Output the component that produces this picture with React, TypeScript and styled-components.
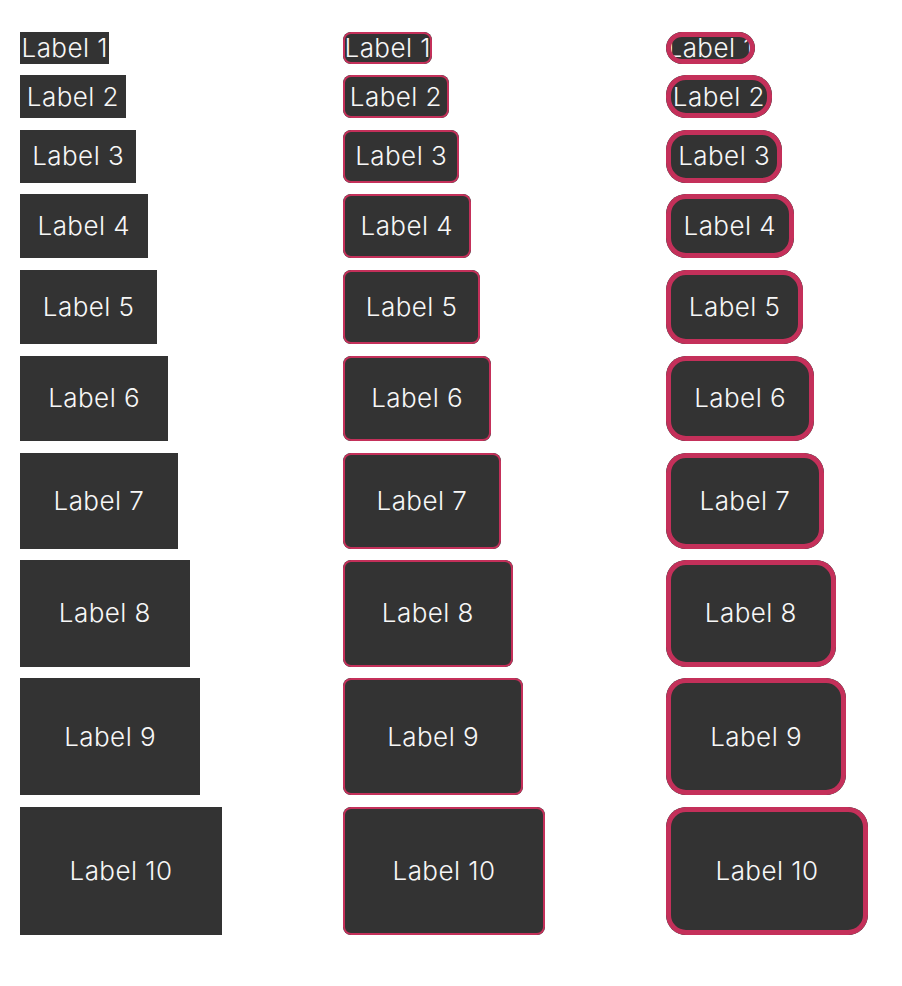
import styled, { createGlobalStyle, css } from 'styled-components';

const GlobalStyle = createGlobalStyle`
  html, body {
    margin: 0;
    background: #fff;
  }

  body {
    font-family: Inter, "Noto Sans", sans-serif;
  }
`;

type Variant = 'plain' | 'thin' | 'thick';

// every label grows its padding by the same step
const STEP = 16 / 3;

const Page = styled.div`
  display: grid;
  grid-template-columns: 323px 323px 1fr;
  padding: 32px 0 0 20px;
`;

const Column = styled.div`
  display: flex;
  flex-direction: column;
  align-items: flex-start;
  gap: 11.44px;
`;

const Tag = styled.div<{ $variant: Variant }>`
  position: relative;
  overflow: hidden;
  background: #333333;
  color: #f7f7f7;
  font-size: 26px;
  font-weight: 350;
  line-height: 32px;
  letter-spacing: 0.45px;
  white-space: nowrap;

  ${({ $variant }) => $variant === 'thin' && css`
    border-radius: 8px;

    &::after {
      content: '';
      position: absolute;
      inset: 0;
      border: 2.5px solid #c4305a;
      border-radius: 8px;
    }
  `}

  ${({ $variant }) => $variant === 'thick' && css`
    border-radius: 20px;

    &::after {
      content: '';
      position: absolute;
      inset: 0;
      border: 5px solid #c4305a;
      border-radius: 20px;
    }
  `}
`;

const labels = Array.from({ length: 10 }, (_, i) => i + 1);
const variants: Variant[] = ['plain', 'thin', 'thick'];

const App = () => (
  <>
    <GlobalStyle />
    <Page>
      {variants.map((variant) => (
        <Column key={variant}>
          {labels.map((n) => {
            const v = STEP * (n - 1);
            const h = n > 1 ? v + 1.5 : 1.5;
            return (
              <Tag key={n} $variant={variant} style={{ padding: `${v}px ${h}px` }}>
                Label {n}
              </Tag>
            );
          })}
        </Column>
      ))}
    </Page>
  </>
);

export default App;
